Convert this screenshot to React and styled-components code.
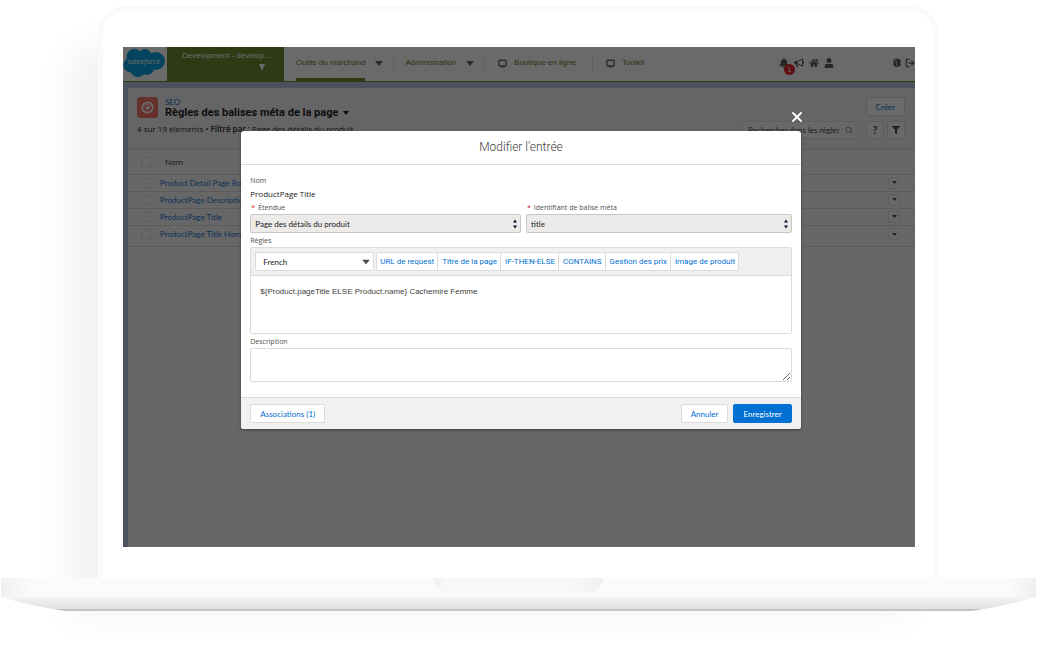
import React from 'react';
import styled, { createGlobalStyle } from 'styled-components';
import { FaBell, FaHome, FaUser, FaFilter } from 'react-icons/fa';
import { LogOut, Search } from 'lucide-react';

const GlobalStyle = createGlobalStyle`
  * {
    box-sizing: border-box;
  }

  body {
    margin: 0;
    background: #fff;
    font-family: Lato, "Open Sans", sans-serif;
    font-size: 8px;
    line-height: 12px;
    color: #181818;
  }

  button, input, select, textarea {
    font: inherit;
    color: inherit;
    margin: 0;
  }

  a {
    color: #0070d2;
    text-decoration: none;
  }
`;

/* ---------- laptop ---------- */

const Laptop = styled.div`
  padding: 6px 1px 50px;
  overflow: hidden;
`;

const Lid = styled.div`
  margin: 0 97px;
  padding: 36px 19px 31px 20px;
  border: 5px solid #fafafa;
  border-bottom: 0;
  border-radius: 28px 28px 0 0;
  background: #fff;
  box-shadow: -30px 38px 35px rgba(0, 0, 0, 0.05);
`;

const Base = styled.div`
  position: relative;
  display: flex;
  justify-content: center;
  height: 19px;
  background: linear-gradient(90deg, #efefef, #fbfbfb 30px, #fbfbfb calc(100% - 30px), #efefef);
`;

const Notch = styled.div`
  width: 169px;
  height: 14px;
  border-radius: 0 0 14px 14px;
  background: linear-gradient(90deg, #f1eff0, #f9f7f8 12px, #f9f7f8 calc(100% - 34px), #f1eff0);
`;

const Foot = styled.div`
  position: relative;
  height: 14px;
  border-bottom: 2px solid #c4c4c4;
  background: linear-gradient(#f4f4f4, #e0e0e0);
  clip-path: polygon(
    0 0, 18px 5px, 36px 9px, 52px 12px, 64px 14px,
    calc(100% - 64px) 14px, calc(100% - 52px) 12px, calc(100% - 36px) 9px, calc(100% - 18px) 5px, 100% 0
  );
`;

const Screen = styled.div`
  position: relative;
  display: flex;
  flex-direction: column;
  min-height: 500px;
  overflow: hidden;
  background: #b0c4df;
`;

/* ---------- top navigation ---------- */

const TopBar = styled.header`
  display: flex;
  height: 35px;
  background: #fff;
  border-bottom: 1px solid #648728;
  font-family: "Liberation Sans", Arial, sans-serif;
  color: #5d7a24;
`;

const LogoBox = styled.div`
  width: 44px;
  padding-top: 1px;

  svg {
    display: block;
  }
`;

const SiteButton = styled.button`
  display: flex;
  flex-direction: column;
  width: 117px;
  padding: 3px 10px 0 15px;
  border: 0;
  background: #648728;
  color: #fff;
  text-align: left;
  white-space: nowrap;

  svg {
    margin: 2px 0 0 77px;
  }
`;

const Nav = styled.nav`
  display: flex;
`;

const NavItem = styled.div`
  display: flex;
  align-items: center;
  gap: ${p => (p.$menu ? '10px' : '7px')};
  padding: ${p => (p.$menu ? '0 10px 0 12px' : '0 16px 0 14px')};

  & + & {
    background: linear-gradient(#e8e8e8, #e8e8e8) left center / 1px 20px no-repeat;
  }

  a {
    display: flex;
    align-items: center;
    height: 100%;
    padding-bottom: 2px;
    color: inherit;
    box-shadow: ${p => (p.$active ? 'inset 0 -3px #648728' : 'none')};
  }

  svg {
    margin-bottom: 2px;
    color: #666;
  }
`;

const Tools = styled.div`
  display: flex;
  align-items: flex-start;
  gap: 5px;
  margin-left: auto;
  padding-top: 11px;
  color: #555;

  button {
    position: relative;
    width: 10px;
    height: 10px;
    padding: 0;
    border: 0;
    background: none;
  }

  button:nth-child(5) {
    margin-left: 53px;
  }

  button:last-child {
    margin-left: -2px;
  }

  svg {
    display: block;
    width: 10px;
    height: 10px;
  }
`;

const Badge = styled.span`
  position: absolute;
  top: 6px;
  left: 5px;
  width: 11px;
  height: 11px;
  border-radius: 50%;
  background: #e02020;
  color: #fff;
  font-size: 7px;
  line-height: 11px;
`;

/* ---------- list page ---------- */

const Card = styled.main`
  flex: 1;
  margin: 6px 0 0 5px;
  border-radius: 2px 2px 0 0;
  background: #f8f8f8;
`;

const CardHeader = styled.div`
  display: flex;
  justify-content: space-between;
  padding: 9px 10px 10px 9px;
  border-bottom: 1px solid #dddbda;
  background: #f3f3f3;
`;

const TitleRow = styled.div`
  display: flex;
  gap: 7px;
  height: 21px;
  margin-bottom: 5px;
`;

const TitleIcon = styled.span`
  width: 21px;
  height: 21px;
  border-radius: 3px;
  background: #f26f63;
`;

const Crumb = styled.a`
  display: block;
  line-height: 10px;
`;

const Title = styled.h1`
  display: flex;
  align-items: center;
  gap: 5px;
  margin: 0;
  font-family: Roboto, sans-serif;
  font-size: 11px;
  font-weight: 700;
  line-height: 12px;
`;

const Meta = styled.p`
  margin: 0;
  font-family: "Open Sans", sans-serif;
  line-height: 12px;

  b {
    font-weight: 600;
  }
`;

const Actions = styled.div`
  display: flex;
  flex-direction: column;
  align-items: flex-end;
  gap: 5px;
`;

const ActionRow = styled.div`
  display: flex;
  gap: 3px;
`;

const Button = styled.button`
  height: 19px;
  padding: 0 9px;
  border: 1px solid ${p => (p.$brand ? '#0070d2' : '#dddbda')};
  border-radius: 2px;
  background: ${p => (p.$brand ? '#0070d2' : '#fff')};
  color: ${p => (p.$brand ? '#fff' : '#0070d2')};
`;

const IconButton = styled.button`
  display: flex;
  align-items: center;
  justify-content: center;
  width: ${p => (p.$small ? '12px' : '18px')};
  height: ${p => (p.$small ? '12px' : '18px')};
  padding: 0;
  border: 1px solid #e2e0df;
  border-radius: 2px;
  background: #fbfbfb;
  color: #444;
  font-size: 11px;
  font-weight: 700;
`;

const SearchBox = styled.label`
  display: flex;
  align-items: center;
  gap: 6px;
  width: 117px;
  height: 18px;
  margin-right: 5px;
  padding: 0 4px 0 6px;
  border: 1px solid #e2e0df;
  border-radius: 2px;
  background: #fbfbfb;

  input {
    flex: 1;
    min-width: 0;
    padding: 0;
    border: 0;
    outline: 0;
    background: none;
  }

  input::placeholder {
    color: #444;
    opacity: 1;
  }
`;

const Table = styled.table`
  width: 100%;
  border-collapse: collapse;

  th, td {
    height: 17px;
    padding: 0;
    border-bottom: 1px solid #dddbda;
    text-align: left;
    vertical-align: middle;
    font-weight: 400;
  }

  th {
    height: 24px;
    padding-left: 5px;
    font-family: "Open Sans", sans-serif;
  }

  tr:last-child td {
    height: 21px;
    padding-bottom: 3px;
  }

  th:first-child, td:first-child {
    width: 32px;
    padding-left: 13px;
  }

  td:last-child {
    width: 27px;
  }

  input {
    appearance: none;
    display: block;
    width: 10px;
    height: 10px;
    border: 1px solid #e2e0df;
    border-radius: 1px;
    background: #fbfbfb;
  }
`;

/* ---------- modal ---------- */

const Backdrop = styled.div`
  position: absolute;
  inset: 0;
  padding: 84px 0 0 4px;
  background: rgba(8, 7, 7, 0.6);
`;

const Modal = styled.section`
  position: relative;
  width: 71%;
  margin: 0 auto;
  border-radius: 3px;
  background: #fff;
  box-shadow: 0 1px 3px rgba(0, 0, 0, 0.4);
  color: #3e3e3c;
`;

const Close = styled.button`
  position: absolute;
  top: -21px;
  right: -3px;
  width: 14px;
  height: 14px;
  padding: 0;
  border: 0;
  background: none;
  color: #fff;

  svg {
    display: block;
  }
`;

const ModalTitle = styled.h2`
  margin: 0;
  padding: 8px 0;
  border-bottom: 1px solid #dddbda;
  font-family: Roboto, sans-serif;
  font-size: 12px;
  font-weight: 300;
  line-height: 17px;
  text-align: center;
`;

const Form = styled.form`
  padding: 10px 9px 15px;
`;

const Label = styled.label`
  display: block;
  font-family: "Open Sans", sans-serif;
  font-size: 7px;
  line-height: 12px;
  color: #514f4d;

  abbr {
    margin: 0 3px 0 1px;
    color: #e02020;
    text-decoration: none;
  }
`;

const Static = styled.output`
  display: block;
  margin-bottom: 2px;
  font-family: "Open Sans", sans-serif;
  line-height: 13px;
  color: #181818;
`;

const FieldRow = styled.div`
  display: grid;
  grid-template-columns: 271fr 266fr;
  gap: 5px;
  margin-bottom: 2px;
`;

const SelectWrap = styled.div`
  position: relative;
  width: ${p => p.$width || 'auto'};

  select {
    appearance: none;
    display: block;
    width: 100%;
    height: 19px;
    padding: 0 ${p => (p.$width ? '7px' : '4px')};
    border: 1px solid ${p => (p.$width ? '#dddbda' : '#c9c7c5')};
    border-radius: 2px;
    background: ${p => (p.$width ? '#fff' : '#ecebea')};
    color: #181818;
  }

  svg {
    position: absolute;
    top: 50%;
    right: 4px;
    transform: translateY(-50%);
    pointer-events: none;
  }
`;

const Editor = styled.div`
  margin-bottom: 2px;
  border: 1px solid #dddbda;
  border-radius: 2px;
  overflow: hidden;

  textarea {
    display: block;
    width: 100%;
    height: 57px;
    padding: 10px 9px;
    border: 0;
    outline: 0;
    resize: none;
    font-family: "Liberation Sans", Arial, sans-serif;
    color: #3e3e3c;
  }
`;

const Toolbar = styled.div`
  display: flex;
  gap: 2px;
  padding: 4px;
  border-bottom: 1px solid #dddbda;
  background: #f0f0f0;
`;

const ButtonGroup = styled.div`
  display: flex;

  button {
    padding: 0 3px;
    border-radius: 0;
    font-family: Roboto, sans-serif;
    white-space: nowrap;
  }

  button + button {
    border-left: 0;
    padding-left: 4px;
  }

  button:first-child {
    border-radius: 2px 0 0 2px;
  }

  button:last-child {
    border-radius: 0 2px 2px 0;
  }
`;

const Description = styled.textarea`
  display: block;
  width: 100%;
  height: 34px;
  padding: 4px;
  border: 1px solid #dddbda;
  border-radius: 2px;
  resize: vertical;
`;

const ModalFooter = styled.footer`
  display: flex;
  gap: 5px;
  padding: 6px 9px;
  border-top: 1px solid #dddbda;
  border-radius: 0 0 3px 3px;
  background: #f1f1f1;

  button:first-child {
    margin-right: auto;
  }
`;

/* ---------- icons ---------- */

const Down = ({ w = 8, h = 5, color = 'currentColor' }) => (
    <svg width={w} height={h} viewBox='0 0 8 5' preserveAspectRatio='none'>
        <path d='M0 0h8L4 5z' fill={color}/>
    </svg>
);

const UpDown = () => (
    <svg width='4' height='10' viewBox='0 0 4 10'>
        <path d='M0 3.5L2 .5l2 3zM0 6.5h4l-2 3z' fill='#080730'/>
    </svg>
);

const Monitor = () => (
    <svg width='9' height='9' viewBox='0 0 9 9'>
        <rect x='.8' y='1.2' width='7.4' height='5.8' rx='1.2' fill='none' stroke='currentColor' strokeWidth='1.4'/>
        <path d='M2.5 7h4v1.5h-4z' fill='currentColor'/>
    </svg>
);

const Megaphone = () => (
    <svg viewBox='0 0 10 10'>
        <path d='M.5 3h3.2v3H.5zM1.6 6h1.6l.9 3H2.6z' fill='currentColor'/>
        <path d='M3.7 3.2L8.6 1v7L3.7 5.8M8.6 3.6h1v1.6h-1' fill='none' stroke='currentColor' strokeWidth='1'/>
    </svg>
);

const Book = () => (
    <svg viewBox='0 0 10 10'>
        <path d='M1.5 1.6L5.6.4l3 1.4v6L4.8 9.6 1.5 7.6z' fill='currentColor'/>
        <path d='M1.8 1.9l3 1.5v6' fill='none' stroke='#fff' strokeWidth='.6'/>
    </svg>
);

const Gauge = () => (
    <svg width='21' height='21' viewBox='0 0 21 21'>
        <circle cx='10.5' cy='10.5' r='5.2' fill='none' stroke='#fff' strokeWidth='1.8'/>
        <path d='M7 10.5a3.5 3.5 0 0 1 5-3' fill='none' stroke='#fff' strokeWidth='1'/>
        <path d='M13.6 7.8l-1.6 4a1.6 1.6 0 1 1-2-2z' fill='#fff'/>
    </svg>
);

const SalesforceLogo = () => (
    <svg width='43' height='30' viewBox='0 0 43 30' role='img' aria-label='salesforce'>
        <g fill='#00a1e0'>
            <circle cx='11.5' cy='9' r='8'/>
            <circle cx='22' cy='7.5' r='6.5'/>
            <circle cx='33' cy='13' r='9'/>
            <circle cx='8' cy='17' r='7.6'/>
            <circle cx='15' cy='21' r='8'/>
            <circle cx='24' cy='20' r='7'/>
            <path d='M8 8h25v12H10z'/>
        </g>
        <text x='21' y='16' textAnchor='middle' fontFamily='Open Sans, sans-serif' fontSize='7' fill='#fff'>
            sales<tspan fontStyle='italic'>f</tspan>orce
        </text>
    </svg>
);

/* ---------- page ---------- */

const rules = [
    'Product Detail Page Rock',
    'ProductPage Description',
    'ProductPage Title',
    'ProductPage Title Home',
];

const snippets = ['URL de request', 'Titre de la page', 'IF-THEN-ELSE', 'CONTAINS', 'Gestion des prix', 'Image de produit'];

const Header = () => (
    <TopBar>
        <LogoBox><SalesforceLogo/></LogoBox>
        <SiteButton>
            <span>Development - develop…</span>
            <Down w={6} h={7}/>
        </SiteButton>
        <Nav>
            <NavItem $menu $active><a href='#outils'>Outils du marchand</a><Down/></NavItem>
            <NavItem $menu><a href='#admin'>Administration</a><Down/></NavItem>
            <NavItem><Monitor/><a href='#boutique'>Boutique en ligne</a></NavItem>
            <NavItem><Monitor/><a href='#toolkit'>Toolkit</a></NavItem>
        </Nav>
        <Tools>
            <button aria-label='Notifications'><FaBell/><Badge>1</Badge></button>
            <button aria-label='Annonces'><Megaphone/></button>
            <button aria-label='Accueil'><FaHome/></button>
            <button aria-label='Profil'><FaUser/></button>
            <button aria-label='Documentation'><Book/></button>
            <button aria-label='Déconnexion'><LogOut strokeWidth={3}/></button>
        </Tools>
    </TopBar>
);

const RulesList = () => (
    <Card>
        <CardHeader>
            <div>
                <TitleRow>
                    <TitleIcon><Gauge/></TitleIcon>
                    <div>
                        <Crumb href='#seo'>SEO</Crumb>
                        <Title>Règles des balises méta de la page <Down w={6} h={4}/></Title>
                    </div>
                </TitleRow>
                <Meta>4 sur 19 éléments • <b>Filtré par :</b> Page des détails du produit</Meta>
            </div>
            <Actions>
                <Button>Créer</Button>
                <ActionRow>
                    <SearchBox>
                        <input type='text' aria-label='Rechercher' placeholder='Rechercher dans les règles'/>
                        <Search size={8} color='#555'/>
                    </SearchBox>
                    <IconButton aria-label='Aide'>?</IconButton>
                    <IconButton aria-label='Filtrer'><FaFilter size={8}/></IconButton>
                </ActionRow>
            </Actions>
        </CardHeader>
        <Table>
            <thead>
                <tr>
                    <th><input type='checkbox' aria-label='Tout sélectionner'/></th>
                    <th>Nom</th>
                    <th></th>
                </tr>
            </thead>
            <tbody>
                {rules.map(rule => (
                    <tr key={rule}>
                        <td><input type='checkbox' aria-label={rule}/></td>
                        <td><a href='#regle'>{rule}</a></td>
                        <td><IconButton $small aria-label='Actions'><Down w={5} h={3}/></IconButton></td>
                    </tr>
                ))}
            </tbody>
        </Table>
    </Card>
);

const EditModal = () => (
    <Backdrop>
        <Modal role='dialog' aria-labelledby='modal-title'>
            <Close aria-label='Fermer'>
                <svg width='14' height='14' viewBox='0 0 14 14'>
                    <path d='M3 3l8 8M11 3l-8 8' stroke='#fff' strokeWidth='1.8' strokeLinecap='round'/>
                </svg>
            </Close>
            <ModalTitle id='modal-title'>Modifier l’entrée</ModalTitle>
            <Form>
                <Label htmlFor='nom'>Nom</Label>
                <Static id='nom'>ProductPage Title</Static>
                <FieldRow>
                    <div>
                        <Label htmlFor='etendue'><abbr>*</abbr>Étendue</Label>
                        <SelectWrap>
                            <select id='etendue'><option>Page des détails du produit</option></select>
                            <UpDown/>
                        </SelectWrap>
                    </div>
                    <div>
                        <Label htmlFor='balise'><abbr>*</abbr>Identifiant de balise méta</Label>
                        <SelectWrap>
                            <select id='balise'><option>title</option></select>
                            <UpDown/>
                        </SelectWrap>
                    </div>
                </FieldRow>
                <Label htmlFor='regles'>Règles</Label>
                <Editor>
                    <Toolbar>
                        <SelectWrap $width='119px'>
                            <select aria-label='Langue'><option>French</option></select>
                            <Down color='#514f4d'/>
                        </SelectWrap>
                        <ButtonGroup>
                            {snippets.map(s => <Button type='button' key={s}>{s}</Button>)}
                        </ButtonGroup>
                    </Toolbar>
                    <textarea id='regles' defaultValue='${Product.pageTitle ELSE Product.name} Cachemire Femme'/>
                </Editor>
                <Label htmlFor='description'>Description</Label>
                <Description id='description'/>
            </Form>
            <ModalFooter>
                <Button>Associations (1)</Button>
                <Button>Annuler</Button>
                <Button $brand>Enregistrer</Button>
            </ModalFooter>
        </Modal>
    </Backdrop>
);

const App = () => {
    return (
        <Laptop>
            <GlobalStyle/>
            <Lid>
                <Screen>
                    <Header/>
                    <RulesList/>
                    <EditModal/>
                </Screen>
            </Lid>
            <Base><Notch/></Base>
            <Foot/>
        </Laptop>
    );
}

export default App;
